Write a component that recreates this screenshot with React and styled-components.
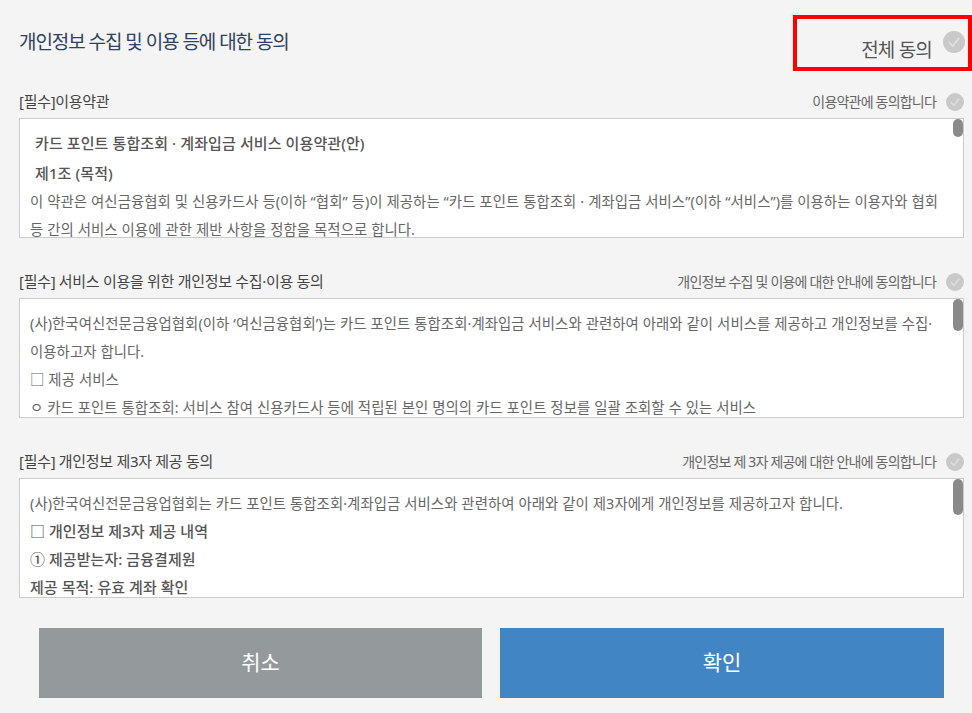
import React from 'react';
import styled, { createGlobalStyle } from 'styled-components';

const GlobalStyle = createGlobalStyle`
  html, body {
    margin: 0;
    padding: 0;
    background: #f4f4f4;
  }
  body {
    font-family: "Noto Sans", "Noto Sans CJK KR", sans-serif;
    overflow: hidden;
  }
  * {
    box-sizing: border-box;
  }
`;

function CheckIcon({ size = 18 }) {
  return (
    <CheckCircle $size={size}>
      <svg width={size} height={size} viewBox="0 0 18 18" fill="none">
        <path d="M5 9.2 L8 12.4 L13.2 5.6" stroke="#dedede" strokeWidth="1.5" />
      </svg>
    </CheckCircle>
  );
}

function App() {
  return (
    <Page>
      <GlobalStyle />
      <TopBar>
        <Title>개인정보 수집 및 이용 등에 대한 동의</Title>
        <AllAgree>
          <AllAgreeLabel>전체 동의</AllAgreeLabel>
          <CheckIcon size={22} />
        </AllAgree>
      </TopBar>

      <Section>
        <SectionHead>
          <SectionTitle>[필수]이용약관</SectionTitle>
          <Agree>
            이용약관에 동의합니다
            <CheckIcon />
          </Agree>
        </SectionHead>
        <TermsBox>
          <Heading>카드 포인트 통합조회 · 계좌입금 서비스 이용약관(안)</Heading>
          <Heading>제1조 (목적)</Heading>
          <Line>
            이 약관은 여신금융협회 및 신용카드사 등(이하 “협회” 등)이 제공하는 “카드 포인트 통합조회 · 계좌입금 서비스”(이하 “서비스”)를 이용하는 이용자와 협회
          </Line>
          <Line>등 간의 서비스 이용에 관한 제반 사항을 정함을 목적으로 합니다.</Line>
          <Thumb $height={18} />
        </TermsBox>
      </Section>

      <Section>
        <SectionHead>
          <SectionTitle>[필수] 서비스 이용을 위한 개인정보 수집·이용 동의</SectionTitle>
          <Agree>
            개인정보 수집 및 이용에 대한 안내에 동의합니다
            <CheckIcon />
          </Agree>
        </SectionHead>
        <TermsBox $top={11}>
          <Line>
            (사)한국여신전문금융업협회(이하 ‘여신금융협회’)는 카드 포인트 통합조회·계좌입금 서비스와 관련하여 아래와 같이 서비스를 제공하고 개인정보를 수집·
          </Line>
          <Line>이용하고자 합니다.</Line>
          <Line>□ 제공 서비스</Line>
          <Line>ㅇ 카드 포인트 통합조회: 서비스 참여 신용카드사 등에 적립된 본인 명의의 카드 포인트 정보를 일괄 조회할 수 있는 서비스</Line>
          <Thumb $height={32} />
        </TermsBox>
      </Section>

      <Section>
        <SectionHead>
          <SectionTitle>[필수] 개인정보 제3자 제공 동의</SectionTitle>
          <Agree>
            개인정보 제 3자 제공에 대한 안내에 동의합니다
            <CheckIcon />
          </Agree>
        </SectionHead>
        <TermsBox $top={11}>
          <Line>(사)한국여신전문금융업협회는 카드 포인트 통합조회·계좌입금 서비스와 관련하여 아래와 같이 제3자에게 개인정보를 제공하고자 합니다.</Line>
          <BoldLine>□ 개인정보 제3자 제공 내역</BoldLine>
          <BoldLine>① 제공받는자: 금융결제원</BoldLine>
          <BoldLine>제공 목적: 유효 계좌 확인</BoldLine>
          <Thumb $height={36} />
        </TermsBox>
      </Section>

      <Buttons>
        <ActionButton $color="#94999c">취소</ActionButton>
        <ActionButton $color="#4285c5">확인</ActionButton>
      </Buttons>
    </Page>
  );
}

const Page = styled.div`
  width: 972px;
  height: 713px;
  padding: 15px 8px 0 19px;
  overflow: hidden;
`;

const TopBar = styled.header`
  display: flex;
  justify-content: space-between;
  align-items: flex-start;
  height: 56px;
  margin-bottom: 18px;
`;

const Title = styled.h1`
  margin: 13px 0 0;
  font-size: 19px;
  line-height: 28px;
  font-weight: 400;
  letter-spacing: -1.05px;
  color: #2d4263;
`;

const AllAgree = styled.div`
  display: flex;
  justify-content: flex-end;
  align-items: flex-start;
  gap: 11px;
  width: 179px;
  height: 56px;
  margin-right: -8px;
  padding: 12px 3px 0 0;
  border: 4px solid #fe0000;
`;

const AllAgreeLabel = styled.span`
  margin-top: 5px;
  font-size: 19px;
  line-height: 28px;
  letter-spacing: -0.8px;
  color: #555;
`;

const CheckCircle = styled.span`
  display: block;
  flex: none;
  width: ${({ $size }) => $size}px;
  height: ${({ $size }) => $size}px;
  border-radius: 50%;
  background: #c9c9c9;
  svg {
    display: block;
  }
`;

const Section = styled.section`
  margin-bottom: 31px;
`;

const SectionHead = styled.div`
  display: flex;
  justify-content: space-between;
  align-items: center;
  height: 29px;
  padding-bottom: 4px;
`;

const SectionTitle = styled.h2`
  margin: 0;
  font-size: 15px;
  line-height: 19px;
  font-weight: 400;
  letter-spacing: -0.3px;
  color: #444;
`;

const Agree = styled.div`
  display: flex;
  align-items: center;
  gap: 10px;
  font-size: 14px;
  line-height: 19px;
  letter-spacing: -0.8px;
  color: #666;
`;

const TermsBox = styled.div`
  position: relative;
  height: 120px;
  padding: ${({ $top }) => $top || 10}px 10px 0 10px;
  border: 1px solid #ccc;
  background: #fff;
  overflow: hidden;
`;

const Line = styled.p`
  margin: 0;
  font-size: 14.4px;
  line-height: 28px;
  letter-spacing: 0.065px;
  word-spacing: 0.1px;
  color: #666;
  white-space: nowrap;
`;

const Heading = styled.p`
  margin: 0;
  padding-left: 5px;
  font-size: 15px;
  line-height: 29.5px;
  font-weight: 500;
  letter-spacing: 0.1px;
  color: #555;
  white-space: nowrap;
`;

const BoldLine = styled.p`
  margin: 0;
  padding-bottom: 2px;
  font-size: 15px;
  line-height: 26px;
  font-weight: 500;
  letter-spacing: 0.05px;
  color: #555;
  white-space: nowrap;
`;

const Thumb = styled.span`
  position: absolute;
  top: 0;
  right: 0;
  width: 10px;
  height: ${({ $height }) => $height}px;
  border-radius: 5px;
  background: #8a8a8a;
`;

const Buttons = styled.div`
  display: grid;
  grid-template-columns: 443px 444px;
  gap: 18px;
  margin: -1px 0 0 20px;
`;

const ActionButton = styled.button`
  height: 70px;
  border: 0;
  padding: 0 0 4px;
  font: inherit;
  font-size: 21px;
  color: #fff;
  background: ${({ $color }) => $color};
`;

export default App;
